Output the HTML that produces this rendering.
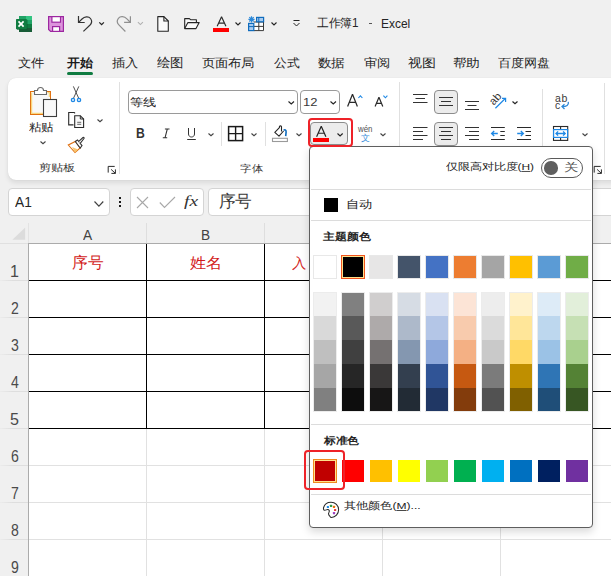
<!DOCTYPE html>
<html><head><meta charset="utf-8"><style>
*{box-sizing:border-box}
html,body{margin:0;padding:0}
body{width:611px;height:576px;overflow:hidden;position:relative;background:#f0f0f0;font-family:"Liberation Sans",sans-serif;color:#242424}
.a{position:absolute}
.t{position:absolute;white-space:nowrap;line-height:1}
svg{position:absolute;overflow:visible}
.tab{position:absolute;top:55px;font-size:14px;line-height:16px;white-space:nowrap;color:#262626}
.ribbon{position:absolute;left:8px;top:78px;width:640px;height:102px;background:#fff;border-radius:8px;box-shadow:0 0 1px rgba(0,0,0,.12),0 3px 5px rgba(0,0,0,.09)}
.sep{position:absolute;width:1px;background:#e0e0e0}
.grp{position:absolute;top:161px;font-size:12px;line-height:14px;color:#424242;white-space:nowrap}
.box{position:absolute;background:#fff;border:1px solid #c8c8c8;border-radius:4px}
.sw{position:absolute;width:24px;height:24px}
.rh{position:absolute;left:0;width:28px;text-align:center;font-size:14px;line-height:14px;color:#424242}
</style></head><body>
<svg style="left:0px;top:0px;" width="611" height="60" viewBox="0 0 611 60">
<rect x="19" y="16" width="13" height="4" fill="#21a366"/>
<rect x="26" y="16" width="6" height="4" fill="#33c481"/>
<rect x="19" y="20" width="13" height="4" fill="#21a366"/>
<rect x="19" y="24" width="13" height="4" fill="#107c41"/>
<rect x="19" y="28" width="13" height="4" fill="#185c37"/>
<rect x="17" y="19.8" width="10.6" height="10.2" fill="#0a5a2e" opacity="0.55"/>
<rect x="16" y="19" width="10.8" height="10.2" rx="0.6" fill="#107c41"/>
<path d="M18.5 21.4 L23.6 26.6 M23.6 21.4 L18.5 26.6" stroke="#fff" stroke-width="1.7"/>
<path d="M48.6 16.6 H63.4 V31.4 H50.6 L48.6 29.4 Z" fill="#dc94dc" stroke="#9c27a0" stroke-width="1.2"/>
<rect x="51.9" y="16.6" width="8.6" height="5.6" fill="#fff" stroke="#9c27a0" stroke-width="1.2"/>
<rect x="52.6" y="26.6" width="7" height="4.8" fill="#fff" stroke="#9c27a0" stroke-width="1.2"/>
</svg>
<svg style="left:0px;top:0px;" width="611" height="60" viewBox="0 0 611 60">
<path d="M78.5 16 V22.5 H84.7" fill="none" stroke="#333" stroke-width="1.2"/>
<path d="M78.9 22.1 L82 19 C84.5 16.5 88.5 16 90.5 18.5 C92.3 20.8 91.8 23.3 89.8 25.3 L83.4 31.4" fill="none" stroke="#333" stroke-width="1.2"/>
<path d="M99.3 22.4 L101.6 24.6 L103.9 22.4" fill="none" stroke="#242424" stroke-width="1.3"/>
<path d="M130.4 16.2 V22.4 H124.1" fill="none" stroke="#8f8f8f" stroke-width="1.2"/>
<path d="M130 22 L126.9 18.8 C124.4 16.3 120.4 15.8 118.4 18.3 C116.6 20.6 117.1 23.1 119.1 25.1 L125.4 31.5" fill="none" stroke="#8f8f8f" stroke-width="1.2"/>
<path d="M137.9 22.2 L140.4 24.6 L142.9 22.2" fill="none" stroke="#b0b0b0" stroke-width="1.1"/>
</svg>
<svg style="left:0px;top:0px;" width="611" height="60" viewBox="0 0 611 60">
<path d="M157.8 16.6 H163.9 L168.3 21 V31.2 H157.8 Z" fill="#fafafa" stroke="#242424" stroke-width="1.1" stroke-linejoin="round"/>
<path d="M163.9 16.6 V21 H168.3" fill="none" stroke="#242424" stroke-width="1.1"/>
<path d="M184.7 28.6 V18.6 H189.4 L190.5 19.7 H196.4 V22.4" fill="#fafafa" stroke="#242424" stroke-width="1.1" stroke-linejoin="round"/>
<path d="M184.7 28.6 L187.9 22.6 H199.2 L196 28.6 Z" fill="#fafafa" stroke="#242424" stroke-width="1.1" stroke-linejoin="round"/>
</svg>
<svg style="left:0px;top:0px;" width="611" height="200" viewBox="0 0 611 200"><path d="M217.17 26.30 L221.55 16.70 L225.93 26.30 M218.58 23.07 H224.52" fill="none" stroke="#2a2a2a" stroke-width="1.15" stroke-linejoin="bevel"/></svg>
<div class="a" style="left:213px;top:28px;width:16px;height:4px;background:#f00;"></div>
<svg style="left:235px;top:21.8px;" width="6" height="3.2" viewBox="0 0 6 3.2"><path d="M0.5 0.5 L3.0 2.9000000000000004 L5.5 0.5" fill="none" stroke="#242424" stroke-width="1.1"/></svg>
<svg style="left:0px;top:0px;" width="611" height="60" viewBox="0 0 611 60">
<path d="M248.4 19.3 H254.6 M251.5 16.2 V22.4 M249.3 17.1 L253.7 21.5 M253.7 17.1 L249.3 21.5" stroke="#2b88d8" stroke-width="1.2"/>
<rect x="254" y="22" width="9.5" height="8.6" fill="#fff"/>
<path d="M254 22 H263.5 V30.6 H254 M258.8 22 V30.6 M254 26.4 H263.5" stroke="#3a3a3a" fill="none" stroke-width="1"/>
<rect x="256.6" y="17.4" width="7" height="4.4" fill="#a9cbef" stroke="#0f6cbd" stroke-width="1.2"/>
<path d="M258.8 17.4 V21.8" stroke="#0f6cbd" stroke-width="1"/>
<rect x="248.6" y="23.4" width="5.2" height="7.2" fill="#a9cbef" stroke="#0f6cbd" stroke-width="1.2"/>
<path d="M248.6 26.6 H253.8" stroke="#0f6cbd" stroke-width="1"/>
</svg>
<svg style="left:271px;top:21.8px;" width="6" height="3.2" viewBox="0 0 6 3.2"><path d="M0.5 0.5 L3.0 2.9000000000000004 L5.5 0.5" fill="none" stroke="#242424" stroke-width="1.1"/></svg>
<svg style="left:293px;top:20px;" width="7" height="7" viewBox="0 0 7 7"><path d="M0.5 0.5 H6.5" stroke="#242424" stroke-width="1"/><path d="M0.5 3 L3.5 6 L6.5 3" fill="none" stroke="#242424" stroke-width="1"/></svg>
<div class="t" style="left:317.10px;top:17.08px;color:#242424;font-size:13px;font-weight:normal;transform:scale(0.896,0.917);transform-origin:0 0;">工作簿1</div>
<div class="a" style="left:369px;top:23px;width:3px;height:1px;background:#555;"></div>
<div class="t" style="left:380.88px;top:17.01px;color:#242424;font-size:13px;font-weight:normal;transform:scale(0.920,1.044);transform-origin:0 0;">Excel</div>
<div class="t" style="left:17.80px;top:57.00px;color:#262626;font-size:13px;font-weight:normal;transform:scale(1.008,0.908);transform-origin:0 0;">文件</div>
<div class="t" style="left:67.30px;top:57.00px;color:#1a1a1a;font-size:13px;font-weight:bold;transform:scale(0.988,0.908);transform-origin:0 0;">开始</div>
<div class="t" style="left:112.00px;top:57.00px;color:#262626;font-size:13px;font-weight:normal;transform:scale(1.008,0.908);transform-origin:0 0;">插入</div>
<div class="t" style="left:157.20px;top:56.02px;color:#262626;font-size:13px;font-weight:normal;transform:scale(1.020,0.983);transform-origin:0 0;">绘图</div>
<div class="t" style="left:202.40px;top:57.00px;color:#262626;font-size:13px;font-weight:normal;transform:scale(1.012,0.908);transform-origin:0 0;">页面布局</div>
<div class="t" style="left:273.70px;top:57.00px;color:#262626;font-size:13px;font-weight:normal;transform:scale(0.973,0.908);transform-origin:0 0;">公式</div>
<div class="t" style="left:318.00px;top:57.00px;color:#262626;font-size:13px;font-weight:normal;transform:scale(1.031,0.908);transform-origin:0 0;">数据</div>
<div class="t" style="left:363.70px;top:57.00px;color:#262626;font-size:13px;font-weight:normal;transform:scale(1.004,0.908);transform-origin:0 0;">审阅</div>
<div class="t" style="left:407.70px;top:57.00px;color:#262626;font-size:13px;font-weight:normal;transform:scale(1.060,0.908);transform-origin:0 0;">视图</div>
<div class="t" style="left:453.00px;top:57.00px;color:#262626;font-size:13px;font-weight:normal;transform:scale(1.036,0.908);transform-origin:0 0;">帮助</div>
<div class="t" style="left:497.80px;top:57.00px;color:#262626;font-size:13px;font-weight:normal;transform:scale(0.990,0.908);transform-origin:0 0;">百度网盘</div>
<div class="a" style="left:67px;top:72px;width:26px;height:3px;background:#107c41;border-radius:1.5px"></div>
<div class="ribbon"></div>
<svg style="left:26px;top:84px;" width="34" height="36" viewBox="0 0 34 36">
<rect x="4.5" y="7.5" width="20" height="23" fill="#f8f8f8" stroke="#e0700f" stroke-width="1"/>
<path d="M5.6 8.6 V29.4 H17 M21.5 8.6 H23.4 V13" fill="none" stroke="#f9d67e" stroke-width="1.3"/>
<path d="M8.5 10.5 V6.5 H11.5 C11.5 2.5 17.5 2.5 17.5 6.5 H20.5 V10.5 Z" fill="#fff" stroke="#6a6a6a" stroke-width="1.1"/>
<rect x="17.5" y="15.5" width="13" height="17" fill="#f9f9f9" stroke="#3d3d3d" stroke-width="1.1"/>
</svg>
<div class="t" style="left:28.70px;top:121.70px;color:#242424;font-size:12px;font-weight:normal;transform:scale(1.012,0.892);transform-origin:0 0;">粘贴</div>
<svg style="left:39.7px;top:141px;" width="6" height="3" viewBox="0 0 6 3"><path d="M0.5 0.5 L3.0 2.7 L5.5 0.5" fill="none" stroke="#424242" stroke-width="1.1"/></svg>
<svg style="left:64px;top:84px;" width="20" height="20" viewBox="0 0 20 20">
<path d="M9.4 2.4 L12.3 9 L14.6 14 M14.8 2.4 L11.9 9 L9.6 14" fill="none" stroke="#505050" stroke-width="1"/>
<circle cx="9" cy="16" r="1.6" fill="none" stroke="#1e88e5" stroke-width="1.4"/>
<circle cx="15" cy="16" r="1.6" fill="none" stroke="#1e88e5" stroke-width="1.4"/>
</svg>
<svg style="left:64px;top:108px;" width="24" height="24" viewBox="0 0 24 24">
<path d="M9.5 16.9 H4.7 V4.5 H10.3 L11 5.4" fill="none" stroke="#2a2a2a" stroke-width="1.1"/>
<path d="M10.7 19.5 V7.7 H16.3 L19.6 11 V19.5 Z" fill="#fafafa" stroke="#2a2a2a" stroke-width="1.1"/>
<path d="M16.3 7.7 V11 H19.6" fill="none" stroke="#2a2a2a" stroke-width="1"/>
<path d="M13.2 14.3 H17.2 M13.2 16.3 H17.2" stroke="#555" stroke-width="0.9"/>
</svg>
<svg style="left:96.7px;top:119.1px;" width="6" height="3" viewBox="0 0 6 3"><path d="M0.5 0.5 L3.0 2.7 L5.5 0.5" fill="none" stroke="#424242" stroke-width="1.1"/></svg>
<svg style="left:66px;top:136px;" width="20" height="20" viewBox="0 0 20 20">
<path d="M2.3 9 L9 16.5 L14.2 12 L9.3 5.5 Z" fill="#fff" stroke="#e0700f" stroke-width="1.1"/>
<path d="M6 11 L9 16.5 L12 13.4 Z" fill="#f9c66c"/>
<path d="M9.3 5.5 L11.5 4 L16 9.6 L14.2 12 Z" fill="#fff" stroke="#333" stroke-width="1.1"/>
<path d="M12.5 5.6 L17 1.5 C17.7 1 18.6 1.8 18 2.5 L14.2 7.4" fill="#fff" stroke="#333" stroke-width="1.1"/>
</svg>
<div class="t" style="left:39.49px;top:163.00px;color:#363636;font-size:12px;font-weight:normal;transform:scale(1.011,0.825);transform-origin:0 0;">剪贴板</div>
<svg style="left:108px;top:166px;" width="9" height="9" viewBox="0 0 9 9"><path d="M0.2 6.6 V0.4 H6.7 M3.1 3.4 L7.3 7.3 M7.4 3.4 V7.4 H3.4" fill="none" stroke="#1f1f1f" stroke-width="0.95"/></svg>
<div class="sep" style="left:119px;top:82px;height:92px"></div>
<div class="box" style="left:128px;top:90px;width:170px;height:24px;border-color:#9a9a9a"></div>
<div class="t" style="left:129.75px;top:96.50px;color:#242424;font-size:12px;font-weight:normal;transform:scale(1.052,0.875);transform-origin:0 0;">等线</div>
<svg style="left:288px;top:100.8px;" width="6.5" height="3.2" viewBox="0 0 6.5 3.2"><path d="M0.5 0.5 L3.25 2.9000000000000004 L6.0 0.5" fill="none" stroke="#242424" stroke-width="1.15"/></svg>
<div class="box" style="left:300px;top:90px;width:40px;height:24px;border-color:#9a9a9a"></div>
<div class="t" style="left:302.82px;top:96.44px;color:#383838;font-size:12px;font-weight:normal;transform:scale(1.083,0.956);transform-origin:0 0;">12</div>
<svg style="left:330px;top:100.8px;" width="6.5" height="3.2" viewBox="0 0 6.5 3.2"><path d="M0.5 0.5 L3.25 2.9000000000000004 L6.0 0.5" fill="none" stroke="#242424" stroke-width="1.15"/></svg>
<svg style="left:0px;top:0px;" width="611" height="200" viewBox="0 0 611 200"><path d="M347.62 106.50 L352.50 94.30 L357.38 106.50 M349.20 102.38 H355.80" fill="none" stroke="#2a2a2a" stroke-width="1.25" stroke-linejoin="bevel"/></svg>
<svg style="left:357.5px;top:94.5px;" width="5" height="3.5" viewBox="0 0 5 3.5"><path d="M0.4 3 L2.4 0.8 L4.4 3" fill="none" stroke="#1e88e5" stroke-width="1.1"/></svg>
<svg style="left:0px;top:0px;" width="611" height="200" viewBox="0 0 611 200"><path d="M375.10 106.50 L378.95 97.30 L382.80 106.50 M376.28 103.40 H381.62" fill="none" stroke="#2a2a2a" stroke-width="1.2" stroke-linejoin="bevel"/></svg>
<svg style="left:383.3px;top:94.5px;" width="5" height="3.5" viewBox="0 0 5 3.5"><path d="M0.4 0.6 L2.4 2.8 L4.4 0.6" fill="none" stroke="#1e88e5" stroke-width="1.1"/></svg>
<div class="t" style="left:135.86px;top:126.39px;color:#333;font-size:13px;font-weight:bold;transform:scale(0.938,1.056);transform-origin:0 0;">B</div>
<svg style="left:160px;top:127px;" width="12" height="12" viewBox="0 0 12 12"><path d="M4.9 2 H9.5 M2.8 10.8 H7.2 M7.3 2 L5 10.8" fill="none" stroke="#333" stroke-width="1.05"/></svg>
<svg style="left:186px;top:127px;" width="12" height="14" viewBox="0 0 12 14"><path d="M2.5 1 V7 C2.5 11 8.5 11 8.5 7 V1" fill="none" stroke="#333" stroke-width="1"/><path d="M1.2 12.5 H9.8" stroke="#333" stroke-width="1"/></svg>
<svg style="left:207.5px;top:132.8px;" width="6" height="3" viewBox="0 0 6 3"><path d="M0.5 0.5 L3.0 2.7 L5.5 0.5" fill="none" stroke="#424242" stroke-width="1.1"/></svg>
<div class="sep" style="left:221px;top:122px;height:24px"></div>
<svg style="left:227px;top:125px;" width="17" height="17" viewBox="0 0 17 17"><rect x="1.6" y="1.6" width="14" height="14" fill="none" stroke="#1a1a1a" stroke-width="1.5"/><path d="M8.6 1.6 V15.6 M1.6 8.6 H15.6" stroke="#1a1a1a" stroke-width="1.4"/></svg>
<svg style="left:251px;top:133px;" width="6" height="3" viewBox="0 0 6 3"><path d="M0.5 0.5 L3.0 2.7 L5.5 0.5" fill="none" stroke="#424242" stroke-width="1.1"/></svg>
<div class="sep" style="left:265px;top:122px;height:24px"></div>
<svg style="left:0px;top:0px;" width="611" height="200" viewBox="0 0 611 200">
<path d="M283.6 131 L279 136.2 L274.8 132.3 L279.4 127.7 V126.8 C279.4 125.5 281.5 125.5 281.5 126.8 V131.4" fill="none" stroke="#242424" stroke-width="1.1" stroke-linejoin="round"/>
<path d="M283.7 130.4 C284.6 129.2 286.3 129.6 286.1 132.1 L285.7 136.2" fill="none" stroke="#0f6cbd" stroke-width="1.6"/>
<rect x="272.5" y="138.3" width="14.9" height="3.2" fill="#fff" stroke="#9a9a9a" stroke-width="1.1"/>
</svg>
<svg style="left:295.5px;top:133px;" width="6" height="3" viewBox="0 0 6 3"><path d="M0.5 0.5 L3.0 2.7 L5.5 0.5" fill="none" stroke="#424242" stroke-width="1.1"/></svg>
<div class="a" style="left:310px;top:122px;width:38px;height:23px;background:#ececec;border:1px solid #8c8c8c;border-radius:4px"></div>
<svg style="left:0px;top:0px;" width="611" height="200" viewBox="0 0 611 200"><path d="M316.60 136.80 L321.25 126.30 L325.90 136.80 M318.10 133.26 H324.40" fill="none" stroke="#242424" stroke-width="1.2" stroke-linejoin="bevel"/></svg>
<div class="a" style="left:313px;top:138px;width:16px;height:4px;background:#f00;"></div>
<svg style="left:336.5px;top:132.6px;" width="6.2" height="3.2" viewBox="0 0 6.2 3.2"><path d="M0.5 0.5 L3.1 2.9000000000000004 L5.7 0.5" fill="none" stroke="#242424" stroke-width="1.2"/></svg>
<div class="t" style="left:357.70px;top:125.96px;color:#505050;font-size:8px;font-weight:normal;transform:scale(0.987,1.040);transform-origin:0 0;">wén</div>
<div class="t" style="left:361.00px;top:134.00px;color:#3d8fdc;font-size:9px;font-weight:normal;transform:scale(0.987,0.988);transform-origin:0 0;">文</div>
<svg style="left:380.3px;top:133px;" width="6" height="3" viewBox="0 0 6 3"><path d="M0.5 0.5 L3.0 2.7 L5.5 0.5" fill="none" stroke="#424242" stroke-width="1.1"/></svg>
<div class="t" style="left:240.30px;top:162.50px;color:#363636;font-size:12px;font-weight:normal;transform:scale(0.983,0.867);transform-origin:0 0;">字体</div>
<div class="sep" style="left:399px;top:82px;height:64px"></div>
<svg style="left:412.5px;top:0px;" width="20" height="200" viewBox="0 0 20 200"><path d="M0 94.5 H14.5" stroke="#333" stroke-width="1"/><path d="M2.5 98.5 H12" stroke="#333" stroke-width="1"/><path d="M0 102.5 H14.5" stroke="#333" stroke-width="1"/></svg>
<div class="a" style="left:434px;top:90px;width:24px;height:24px;background:#ececec;border:1px solid #8c8c8c;border-radius:4px"></div>
<svg style="left:439px;top:0px;" width="20" height="200" viewBox="0 0 20 200"><path d="M0 97.5 H14" stroke="#333" stroke-width="1"/><path d="M2 101.5 H12" stroke="#333" stroke-width="1"/><path d="M0 105.5 H14" stroke="#333" stroke-width="1"/></svg>
<svg style="left:465px;top:0px;" width="20" height="200" viewBox="0 0 20 200"><path d="M0 101.5 H14" stroke="#333" stroke-width="1"/><path d="M2.5 105.5 H11.5" stroke="#333" stroke-width="1"/><path d="M0 109.5 H14" stroke="#333" stroke-width="1"/></svg>
<svg style="left:412.5px;top:0px;" width="20" height="200" viewBox="0 0 20 200"><path d="M0 127.5 H14.5" stroke="#333" stroke-width="1"/><path d="M0 131.5 H10" stroke="#333" stroke-width="1"/><path d="M0 135.5 H14.5" stroke="#333" stroke-width="1"/><path d="M0 139.5 H10" stroke="#333" stroke-width="1"/></svg>
<div class="a" style="left:434px;top:122px;width:24px;height:24px;background:#ececec;border:1px solid #8c8c8c;border-radius:4px"></div>
<svg style="left:439px;top:0px;" width="20" height="200" viewBox="0 0 20 200"><path d="M0 127.5 H14" stroke="#333" stroke-width="1"/><path d="M2 131.5 H12" stroke="#333" stroke-width="1"/><path d="M0 135.5 H14" stroke="#333" stroke-width="1"/><path d="M2 139.5 H12" stroke="#333" stroke-width="1"/></svg>
<svg style="left:465px;top:0px;" width="20" height="200" viewBox="0 0 20 200"><path d="M0 127.5 H14" stroke="#333" stroke-width="1"/><path d="M4 131.5 H14" stroke="#333" stroke-width="1"/><path d="M0 135.5 H14" stroke="#333" stroke-width="1"/><path d="M4 139.5 H14" stroke="#333" stroke-width="1"/></svg>
<svg style="left:0px;top:0px;" width="611" height="200" viewBox="0 0 611 200">
<text x="0" y="0" transform="translate(497.9 101.3) rotate(-48)" font-family="Liberation Sans" font-size="11" fill="#333" text-anchor="middle">ab</text>
<path d="M495.4 108.3 L505.3 98.5 M502 98.4 H505.6 V102" fill="none" stroke="#1e88e5" stroke-width="1.2"/>
</svg>
<svg style="left:511.8px;top:101.2px;" width="6" height="3" viewBox="0 0 6 3"><path d="M0.5 0.5 L3.0 2.7 L5.5 0.5" fill="none" stroke="#242424" stroke-width="1.2"/></svg>
<svg style="left:0px;top:0px;" width="611" height="200" viewBox="0 0 611 200">
<path d="M491 127.5 H504.8 M500.3 131.5 H504.8 M500.3 135.5 H504.8 M491 139.5 H504.8" stroke="#2a2a2a" stroke-width="1.1"/>
<path d="M491.6 133.5 H497.8 M494.2 131 L491.6 133.5 L494.2 136" fill="none" stroke="#1e88e5" stroke-width="1.3"/>
<path d="M517 127.5 H531 M525.5 131.5 H531 M525.5 135.5 H531 M517 139.5 H531" stroke="#2a2a2a" stroke-width="1.1"/>
<path d="M517.2 133.5 H523.4 M520.8 131 L523.4 133.5 L520.8 136" fill="none" stroke="#1e88e5" stroke-width="1.3"/>
</svg>
<div class="sep" style="left:542px;top:89px;height:57px"></div>
<svg style="left:0px;top:0px;" width="611" height="200" viewBox="0 0 611 200">
<g font-family="Liberation Sans" font-size="10.5" fill="#3a3a3a">
<text x="555.1" y="101.7">a</text><text x="561.6" y="101.7">b</text><text x="555.1" y="108.7">c</text>
</g>
<path d="M568.3 101.8 C569 105 566.5 106.6 562.3 106.6 M564.5 104.3 L562 106.6 L564.5 108.9" fill="none" stroke="#2b88d8" stroke-width="1.3"/>
</svg>
<svg style="left:0px;top:0px;" width="611" height="200" viewBox="0 0 611 200">
<rect x="553.5" y="126.5" width="14.2" height="13.9" fill="#fff" stroke="#2a2a2a" stroke-width="1.1"/>
<path d="M560.6 126.5 V129.5 M560.6 137.4 V140.4" stroke="#2a2a2a" stroke-width="1.1"/>
<rect x="553.6" y="129.6" width="14" height="7.8" fill="#fff" stroke="#1e88e5" stroke-width="1.2"/>
<path d="M556 133.5 H565.2 M558.1 131.4 L556 133.5 L558.1 135.6 M563.1 131.4 L565.2 133.5 L563.1 135.6" fill="none" stroke="#1e88e5" stroke-width="1.3"/>
</svg>
<svg style="left:581.6px;top:132.6px;" width="6" height="3" viewBox="0 0 6 3"><path d="M0.5 0.5 L3.0 2.7 L5.5 0.5" fill="none" stroke="#424242" stroke-width="1.1"/></svg>
<svg style="left:593.6px;top:166px;" width="9" height="9" viewBox="0 0 9 9"><path d="M0.2 6.6 V0.4 H6.7 M3.1 3.4 L7.3 7.3 M7.4 3.4 V7.4 H3.4" fill="none" stroke="#1f1f1f" stroke-width="0.95"/></svg>
<div class="sep" style="left:604px;top:83px;height:91px"></div>
<div class="box" style="left:8px;top:188px;width:102px;height:28px;border-color:#d4d4d4"></div>
<div class="box" style="left:130px;top:188px;width:74px;height:28px;border-color:#d4d4d4"></div>
<div class="box" style="left:208px;top:188px;width:420px;height:28px;border-color:#d4d4d4"></div>
<div class="a" style="left:29px;top:244px;width:611px;height:332px;background:#fff;"></div>
<div class="a" style="left:0px;top:243px;width:28px;height:1px;background:#e0e0e0;"></div>
<div class="a" style="left:28px;top:243px;width:583px;height:1px;background:#ababab;"></div>
<div class="a" style="left:28px;top:223px;width:1px;height:20px;background:#e3e3e3;"></div>
<div class="a" style="left:28px;top:244px;width:1px;height:332px;background:#ababab;"></div>
<svg style="left:0px;top:0px;" width="611" height="576" viewBox="0 0 611 576"><path d="M25.2 227.5 V239.7 H12.4 Z" fill="#dcdcdc"/></svg>
<div class="a" style="left:29px;top:465px;width:582px;height:1px;background:#e1e1e1;"></div>
<div class="a" style="left:29px;top:502px;width:582px;height:1px;background:#e1e1e1;"></div>
<div class="a" style="left:29px;top:539px;width:582px;height:1px;background:#e1e1e1;"></div>
<div class="a" style="left:29px;top:576px;width:582px;height:1px;background:#e1e1e1;"></div>
<div class="a" style="left:29px;top:613px;width:582px;height:1px;background:#e1e1e1;"></div>
<div class="a" style="left:146px;top:223px;width:1px;height:20px;background:#dedede;"></div>
<div class="a" style="left:146px;top:244px;width:1px;height:332px;background:#e1e1e1;"></div>
<div class="a" style="left:264px;top:223px;width:1px;height:20px;background:#dedede;"></div>
<div class="a" style="left:264px;top:244px;width:1px;height:332px;background:#e1e1e1;"></div>
<div class="a" style="left:382px;top:223px;width:1px;height:20px;background:#dedede;"></div>
<div class="a" style="left:382px;top:244px;width:1px;height:332px;background:#e1e1e1;"></div>
<div class="a" style="left:500px;top:223px;width:1px;height:20px;background:#dedede;"></div>
<div class="a" style="left:500px;top:244px;width:1px;height:332px;background:#e1e1e1;"></div>
<div class="a" style="left:0px;top:280px;width:28px;height:1px;background:linear-gradient(90deg,#ececec,#dedede 45%);"></div>
<div class="a" style="left:0px;top:317px;width:28px;height:1px;background:linear-gradient(90deg,#ececec,#dedede 45%);"></div>
<div class="a" style="left:0px;top:354px;width:28px;height:1px;background:linear-gradient(90deg,#ececec,#dedede 45%);"></div>
<div class="a" style="left:0px;top:391px;width:28px;height:1px;background:linear-gradient(90deg,#ececec,#dedede 45%);"></div>
<div class="a" style="left:0px;top:428px;width:28px;height:1px;background:linear-gradient(90deg,#ececec,#dedede 45%);"></div>
<div class="a" style="left:0px;top:465px;width:28px;height:1px;background:linear-gradient(90deg,#ececec,#dedede 45%);"></div>
<div class="a" style="left:0px;top:502px;width:28px;height:1px;background:linear-gradient(90deg,#ececec,#dedede 45%);"></div>
<div class="a" style="left:0px;top:539px;width:28px;height:1px;background:linear-gradient(90deg,#ececec,#dedede 45%);"></div>
<div class="a" style="left:0px;top:576px;width:28px;height:1px;background:linear-gradient(90deg,#ececec,#dedede 45%);"></div>
<div class="a" style="left:29px;top:280px;width:582px;height:1px;background:#000;"></div>
<div class="a" style="left:29px;top:317px;width:582px;height:1px;background:#000;"></div>
<div class="a" style="left:29px;top:354px;width:582px;height:1px;background:#000;"></div>
<div class="a" style="left:29px;top:391px;width:582px;height:1px;background:#000;"></div>
<div class="a" style="left:29px;top:428px;width:582px;height:1px;background:#000;"></div>
<div class="a" style="left:146px;top:244px;width:1px;height:185px;background:#000;"></div>
<div class="a" style="left:264px;top:244px;width:1px;height:185px;background:#000;"></div>
<div class="a" style="left:382px;top:244px;width:1px;height:185px;background:#000;"></div>
<div class="a" style="left:500px;top:244px;width:1px;height:185px;background:#000;"></div>
<div class="t" style="left:9.53px;top:262.44px;color:#4a4a4a;font-size:15px;font-weight:normal;transform:scale(1.071,1.120);transform-origin:0 0;">1</div>
<div class="t" style="left:10.60px;top:299.44px;color:#4a4a4a;font-size:15px;font-weight:normal;transform:scale(0.938,1.120);transform-origin:0 0;">2</div>
<div class="t" style="left:10.60px;top:336.44px;color:#4a4a4a;font-size:15px;font-weight:normal;transform:scale(0.938,1.120);transform-origin:0 0;">3</div>
<div class="t" style="left:10.60px;top:373.44px;color:#4a4a4a;font-size:15px;font-weight:normal;transform:scale(0.938,1.120);transform-origin:0 0;">4</div>
<div class="t" style="left:9.53px;top:410.44px;color:#4a4a4a;font-size:15px;font-weight:normal;transform:scale(1.071,1.120);transform-origin:0 0;">5</div>
<div class="t" style="left:10.60px;top:447.44px;color:#4a4a4a;font-size:15px;font-weight:normal;transform:scale(0.938,1.120);transform-origin:0 0;">6</div>
<div class="t" style="left:10.60px;top:484.44px;color:#4a4a4a;font-size:15px;font-weight:normal;transform:scale(0.938,1.120);transform-origin:0 0;">7</div>
<div class="t" style="left:10.60px;top:521.44px;color:#4a4a4a;font-size:15px;font-weight:normal;transform:scale(0.938,1.120);transform-origin:0 0;">8</div>
<div class="t" style="left:10.60px;top:558.44px;color:#4a4a4a;font-size:15px;font-weight:normal;transform:scale(0.938,1.120);transform-origin:0 0;">9</div>
<div class="t" style="left:83.00px;top:226.86px;color:#424242;font-size:14px;font-weight:normal;transform:scale(0.980,1.070);transform-origin:0 0;">A</div>
<div class="t" style="left:201.03px;top:226.80px;color:#424242;font-size:14px;font-weight:normal;transform:scale(0.975,1.100);transform-origin:0 0;">B</div>
<div class="t" style="left:72.10px;top:254.80px;color:#d21b1b;font-size:16px;font-weight:normal;transform:scale(0.997,1.013);transform-origin:0 0;">序号</div>
<div class="t" style="left:190.00px;top:255.80px;color:#d21b1b;font-size:16px;font-weight:normal;transform:scale(1.000,0.927);transform-origin:0 0;">姓名</div>
<div class="t" style="left:292.40px;top:257.00px;color:#d21b1b;font-size:16px;font-weight:normal;transform:scale(0.894,0.867);transform-origin:0 0;">入</div>
<div class="a" style="left:309px;top:146px;width:284px;height:382px;background:#fff;border:1px solid #5e5e5e;border-radius:4px;box-shadow:0 4px 9px rgba(0,0,0,.15)"></div>
<div class="t" style="left:445.70px;top:162.40px;color:#242424;font-size:12px;font-weight:normal;transform:scale(0.992,0.815);transform-origin:0 0;">仅限高对比度(<u style="text-underline-offset:1px">H</u>)</div>
<div class="a" style="left:541px;top:158px;width:42px;height:20px;border:1px solid #5a5a5a;border-radius:10px"></div>
<div class="a" style="left:544.3px;top:161px;width:13.6px;height:13.6px;background:#5f5f5f;border-radius:50%"></div>
<div class="t" style="left:563.82px;top:162.30px;color:#555;font-size:12px;font-weight:normal;transform:scale(1.180,0.900);transform-origin:0 0;">关</div>
<div class="a" style="left:311px;top:189px;width:280px;height:1px;background:#dcdcdc;"></div>
<div class="a" style="left:324px;top:198px;width:14px;height:14px;background:#000;"></div>
<div class="t" style="left:346.33px;top:199.20px;color:#242424;font-size:12px;font-weight:normal;transform:scale(1.073,0.892);transform-origin:0 0;">自动</div>
<div class="a" style="left:311px;top:220px;width:280px;height:1px;background:#dcdcdc;"></div>
<div class="t" style="left:323.10px;top:231.90px;color:#242424;font-size:12px;font-weight:bold;transform:scale(0.998,0.842);transform-origin:0 0;">主题颜色</div>
<div class="a" style="left:313px;top:255px;width:24px;height:24px;background:#e8e8e8;"></div>
<div class="a" style="left:314px;top:256px;width:22px;height:22px;background:#FFFFFF;"></div>
<div class="a" style="left:341px;top:255px;width:24px;height:24px;background:#000;border:1.5px solid #f0541e;box-shadow:inset 0 0 0 1px #ffe08a"></div>
<div class="a" style="left:369px;top:255px;width:24px;height:24px;background:#e8e8e8;"></div>
<div class="a" style="left:370px;top:256px;width:22px;height:22px;background:#E7E6E6;"></div>
<div class="a" style="left:397px;top:255px;width:24px;height:24px;background:#e8e8e8;"></div>
<div class="a" style="left:398px;top:256px;width:22px;height:22px;background:#44546A;"></div>
<div class="a" style="left:425px;top:255px;width:24px;height:24px;background:#e8e8e8;"></div>
<div class="a" style="left:426px;top:256px;width:22px;height:22px;background:#4472C4;"></div>
<div class="a" style="left:453px;top:255px;width:24px;height:24px;background:#e8e8e8;"></div>
<div class="a" style="left:454px;top:256px;width:22px;height:22px;background:#ED7D31;"></div>
<div class="a" style="left:481px;top:255px;width:24px;height:24px;background:#e8e8e8;"></div>
<div class="a" style="left:482px;top:256px;width:22px;height:22px;background:#A5A5A5;"></div>
<div class="a" style="left:509px;top:255px;width:24px;height:24px;background:#e8e8e8;"></div>
<div class="a" style="left:510px;top:256px;width:22px;height:22px;background:#FFC000;"></div>
<div class="a" style="left:537px;top:255px;width:24px;height:24px;background:#e8e8e8;"></div>
<div class="a" style="left:538px;top:256px;width:22px;height:22px;background:#5B9BD5;"></div>
<div class="a" style="left:565px;top:255px;width:24px;height:24px;background:#e8e8e8;"></div>
<div class="a" style="left:566px;top:256px;width:22px;height:22px;background:#70AD47;"></div>
<div class="a" style="left:313px;top:292px;width:24px;height:120px;background:#ececec;"></div>
<div class="a" style="left:314px;top:293px;width:22px;height:23px;background:#F2F2F2;"></div>
<div class="a" style="left:314px;top:316px;width:22px;height:24px;background:#D9D9D9;"></div>
<div class="a" style="left:314px;top:340px;width:22px;height:24px;background:#BFBFBF;"></div>
<div class="a" style="left:314px;top:364px;width:22px;height:24px;background:#A6A6A6;"></div>
<div class="a" style="left:314px;top:388px;width:22px;height:23px;background:#808080;"></div>
<div class="a" style="left:341px;top:292px;width:24px;height:120px;background:#ececec;"></div>
<div class="a" style="left:342px;top:293px;width:22px;height:23px;background:#808080;"></div>
<div class="a" style="left:342px;top:316px;width:22px;height:24px;background:#595959;"></div>
<div class="a" style="left:342px;top:340px;width:22px;height:24px;background:#404040;"></div>
<div class="a" style="left:342px;top:364px;width:22px;height:24px;background:#262626;"></div>
<div class="a" style="left:342px;top:388px;width:22px;height:23px;background:#0D0D0D;"></div>
<div class="a" style="left:369px;top:292px;width:24px;height:120px;background:#ececec;"></div>
<div class="a" style="left:370px;top:293px;width:22px;height:23px;background:#D0CECE;"></div>
<div class="a" style="left:370px;top:316px;width:22px;height:24px;background:#AEAAAA;"></div>
<div class="a" style="left:370px;top:340px;width:22px;height:24px;background:#757171;"></div>
<div class="a" style="left:370px;top:364px;width:22px;height:24px;background:#3A3838;"></div>
<div class="a" style="left:370px;top:388px;width:22px;height:23px;background:#171616;"></div>
<div class="a" style="left:397px;top:292px;width:24px;height:120px;background:#ececec;"></div>
<div class="a" style="left:398px;top:293px;width:22px;height:23px;background:#D6DCE4;"></div>
<div class="a" style="left:398px;top:316px;width:22px;height:24px;background:#ADB9CA;"></div>
<div class="a" style="left:398px;top:340px;width:22px;height:24px;background:#8497B0;"></div>
<div class="a" style="left:398px;top:364px;width:22px;height:24px;background:#333F4F;"></div>
<div class="a" style="left:398px;top:388px;width:22px;height:23px;background:#222B35;"></div>
<div class="a" style="left:425px;top:292px;width:24px;height:120px;background:#ececec;"></div>
<div class="a" style="left:426px;top:293px;width:22px;height:23px;background:#D9E1F2;"></div>
<div class="a" style="left:426px;top:316px;width:22px;height:24px;background:#B4C6E7;"></div>
<div class="a" style="left:426px;top:340px;width:22px;height:24px;background:#8EA9DB;"></div>
<div class="a" style="left:426px;top:364px;width:22px;height:24px;background:#305496;"></div>
<div class="a" style="left:426px;top:388px;width:22px;height:23px;background:#203764;"></div>
<div class="a" style="left:453px;top:292px;width:24px;height:120px;background:#ececec;"></div>
<div class="a" style="left:454px;top:293px;width:22px;height:23px;background:#FCE4D6;"></div>
<div class="a" style="left:454px;top:316px;width:22px;height:24px;background:#F8CBAD;"></div>
<div class="a" style="left:454px;top:340px;width:22px;height:24px;background:#F4B084;"></div>
<div class="a" style="left:454px;top:364px;width:22px;height:24px;background:#C65911;"></div>
<div class="a" style="left:454px;top:388px;width:22px;height:23px;background:#833C0C;"></div>
<div class="a" style="left:481px;top:292px;width:24px;height:120px;background:#ececec;"></div>
<div class="a" style="left:482px;top:293px;width:22px;height:23px;background:#EDEDED;"></div>
<div class="a" style="left:482px;top:316px;width:22px;height:24px;background:#DBDBDB;"></div>
<div class="a" style="left:482px;top:340px;width:22px;height:24px;background:#C9C9C9;"></div>
<div class="a" style="left:482px;top:364px;width:22px;height:24px;background:#7B7B7B;"></div>
<div class="a" style="left:482px;top:388px;width:22px;height:23px;background:#525252;"></div>
<div class="a" style="left:509px;top:292px;width:24px;height:120px;background:#ececec;"></div>
<div class="a" style="left:510px;top:293px;width:22px;height:23px;background:#FFF2CC;"></div>
<div class="a" style="left:510px;top:316px;width:22px;height:24px;background:#FFE699;"></div>
<div class="a" style="left:510px;top:340px;width:22px;height:24px;background:#FFD966;"></div>
<div class="a" style="left:510px;top:364px;width:22px;height:24px;background:#BF8F00;"></div>
<div class="a" style="left:510px;top:388px;width:22px;height:23px;background:#806000;"></div>
<div class="a" style="left:537px;top:292px;width:24px;height:120px;background:#ececec;"></div>
<div class="a" style="left:538px;top:293px;width:22px;height:23px;background:#DDEBF7;"></div>
<div class="a" style="left:538px;top:316px;width:22px;height:24px;background:#BDD7EE;"></div>
<div class="a" style="left:538px;top:340px;width:22px;height:24px;background:#9BC2E6;"></div>
<div class="a" style="left:538px;top:364px;width:22px;height:24px;background:#2F75B5;"></div>
<div class="a" style="left:538px;top:388px;width:22px;height:23px;background:#1F4E78;"></div>
<div class="a" style="left:565px;top:292px;width:24px;height:120px;background:#ececec;"></div>
<div class="a" style="left:566px;top:293px;width:22px;height:23px;background:#E2EFDA;"></div>
<div class="a" style="left:566px;top:316px;width:22px;height:24px;background:#C6E0B4;"></div>
<div class="a" style="left:566px;top:340px;width:22px;height:24px;background:#A9D08E;"></div>
<div class="a" style="left:566px;top:364px;width:22px;height:24px;background:#548235;"></div>
<div class="a" style="left:566px;top:388px;width:22px;height:23px;background:#375623;"></div>
<div class="a" style="left:311px;top:424px;width:280px;height:1px;background:#dcdcdc;"></div>
<div class="t" style="left:323.50px;top:435.80px;color:#242424;font-size:12px;font-weight:bold;transform:scale(0.964,0.817);transform-origin:0 0;">标准色</div>
<div class="a" style="left:313px;top:459px;width:24px;height:24px;background:#C00000;border:1.5px solid #f08a1e;box-shadow:inset 0 0 0 1px #ffe08a"></div>
<div class="a" style="left:342px;top:460px;width:22px;height:22px;background:#FF0000;"></div>
<div class="a" style="left:370px;top:460px;width:22px;height:22px;background:#FFC000;"></div>
<div class="a" style="left:398px;top:460px;width:22px;height:22px;background:#FFFF00;"></div>
<div class="a" style="left:426px;top:460px;width:22px;height:22px;background:#92D050;"></div>
<div class="a" style="left:454px;top:460px;width:22px;height:22px;background:#00B050;"></div>
<div class="a" style="left:482px;top:460px;width:22px;height:22px;background:#00B0F0;"></div>
<div class="a" style="left:510px;top:460px;width:22px;height:22px;background:#0070C0;"></div>
<div class="a" style="left:538px;top:460px;width:22px;height:22px;background:#002060;"></div>
<div class="a" style="left:566px;top:460px;width:22px;height:22px;background:#7030A0;"></div>
<div class="a" style="left:304px;top:449.5px;width:41px;height:40.5px;border:2px solid #ee2228;border-radius:4px"></div>
<div class="a" style="left:311px;top:494px;width:280px;height:1px;background:#dcdcdc;"></div>
<svg style="left:0px;top:0px;" width="611" height="576" viewBox="0 0 611 576">
<path d="M329.8 516.2 C328.6 515 328.2 513.5 329 512.2 C329.6 511 329.3 509.8 328 509.5 C326.8 509.2 325.8 510.5 324.6 510.3 C323.5 510.1 323.3 508.7 323.6 507.5 C324.6 504 327.8 502.3 331 502.3 C335.3 502.3 338.6 505.6 338.6 509.8 C338.6 514 335.3 517.5 331.5 517.5 C330.8 517.5 330.3 517 329.8 516.2 Z" fill="#fff" stroke="#2a2a2a" stroke-width="1.05"/>
<rect x="326.8" y="505.9" width="2.2" height="2.2" rx="0.5" fill="#1e88e5"/>
<rect x="329.9" y="504.7" width="2.2" height="2.2" rx="0.5" fill="#2e9e48"/>
<rect x="332.9" y="505.8" width="2.2" height="2.2" rx="0.5" fill="#e8740c"/>
<rect x="334" y="508.9" width="2.2" height="2.2" rx="0.5" fill="#e53935"/>
<rect x="332.9" y="512" width="2.2" height="2.2" rx="0.5" fill="#9c3fc0"/>
</svg>
<div class="t" style="left:343.50px;top:500.60px;color:#242424;font-size:12px;font-weight:normal;transform:scale(1.008,0.831);transform-origin:0 0;">其他颜色(<u style="text-underline-offset:1px">M</u>)...</div>
<div class="t" style="left:15.00px;top:195.24px;color:#242424;font-size:14px;font-weight:normal;transform:scale(0.982,0.980);transform-origin:0 0;">A1</div>
<svg style="left:94.4px;top:200.8px;" width="9.8" height="5.4" viewBox="0 0 9.8 5.4"><path d="M0.5 0.5 L4.9 5.1000000000000005 L9.3 0.5" fill="none" stroke="#424242" stroke-width="1.2"/></svg>
<div class="a" style="left:119px;top:197px;width:2px;height:2px;background:#1a1a1a;"></div>
<div class="a" style="left:119px;top:201px;width:2px;height:2px;background:#1a1a1a;"></div>
<div class="a" style="left:119px;top:205px;width:2px;height:2px;background:#1a1a1a;"></div>
<svg style="left:136px;top:196px;" width="14" height="13" viewBox="0 0 14 13"><path d="M1 1 L12 12 M12 1 L1 12" stroke="#a8a8a8" stroke-width="1.1"/></svg>
<svg style="left:159px;top:196px;" width="17" height="13" viewBox="0 0 17 13"><path d="M0.8 6.5 L5.5 11.5 L16 1" fill="none" stroke="#a8a8a8" stroke-width="1.1"/></svg>
<div class="t" style="left:183.93px;top:194.31px;color:#333;font-size:16px;font-weight:normal;font-family:'Liberation Serif',serif;transform:scale(1.220,0.894);transform-origin:0 0;"><i>fx</i></div>
<div class="t" style="left:219.28px;top:194.00px;color:#383838;font-size:16px;font-weight:normal;transform:scale(1.016,1.033);transform-origin:0 0;">序号</div>
<div class="a" style="left:308px;top:118px;width:45px;height:29px;border:2px solid #ee2228;border-radius:4px;z-index:5"></div>
</body></html>
